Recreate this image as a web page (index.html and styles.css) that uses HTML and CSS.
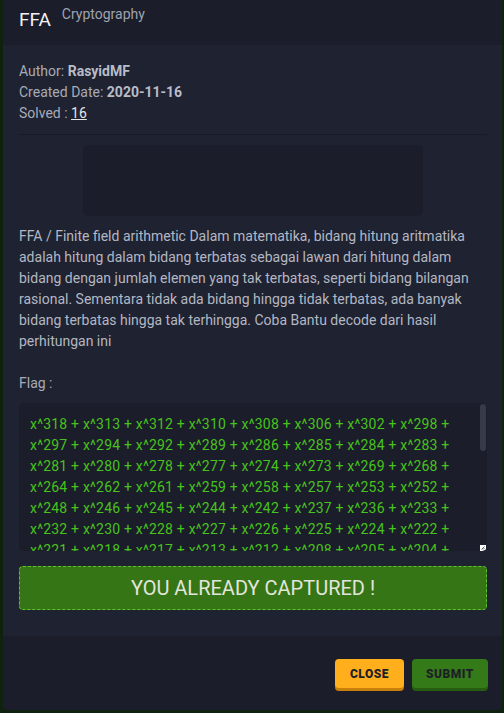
FILE: index.html
```html
<!DOCTYPE html>
<html lang="id">
<head>
<meta charset="utf-8">
<title>FFA</title>
<link rel="stylesheet" href="styles.css">
</head>
<body>
<div class="modal">
  <div class="modal-header">
    <h4 class="title">FFA</h4>
    <span class="category">Cryptography</span>
  </div>
  <div class="modal-body">
    <div class="meta">
      <div>Author: <b>RasyidMF</b></div>
      <div>Created Date: <b>2020-11-16</b></div>
      <div>Solved : <a class="solved" href="#">16</a></div>
    </div>
    <hr class="sep">
    <div class="files"></div>
    <p class="desc">FFA / Finite field arithmetic Dalam matematika, bidang hitung aritmatika adalah hitung dalam bidang terbatas sebagai lawan dari hitung dalam bidang dengan jumlah elemen yang tak terbatas, seperti bidang bilangan rasional. Sementara tidak ada bidang hingga tidak terbatas, ada banyak bidang terbatas hingga tak terhingga. Coba Bantu decode dari hasil perhitungan ini</p>
    <div class="flag-label">Flag :</div>
    <div class="flag-box">
      <div class="flag-text">x^318 + x^313 + x^312 + x^310 + x^308 + x^306 + x^302 + x^298 +
x^297 + x^294 + x^292 + x^289 + x^286 + x^285 + x^284 + x^283 +
x^281 + x^280 + x^278 + x^277 + x^274 + x^273 + x^269 + x^268 +
x^264 + x^262 + x^261 + x^259 + x^258 + x^257 + x^253 + x^252 +
x^248 + x^246 + x^245 + x^244 + x^242 + x^237 + x^236 + x^233 +
x^232 + x^230 + x^228 + x^227 + x^226 + x^225 + x^224 + x^222 +
x^221 + x^218 + x^217 + x^213 + x^212 + x^208 + x^205 + x^204 +
x^202 + x^201 + x^198 + x^197 + x^196 + x^194 + x^193 + x^190 +
x^189 + x^186 + x^185 + x^184 + x^180 + x^178 + x^177 + x^173 +
x^172 + x^170 + x^169 + x^166 + x^164 + x^162 + x^160 + x^158 +
x^157 + x^156 + x^153 + x^150 + x^149 + x^146 + x^145 + x^144</div>
      <span class="scroll-thumb"></span>
      <span class="resizer"><svg width="6" height="6" viewBox="0 0 6 6"><rect width="6" height="6" fill="#ffffff"/><path d="M1.5 4.5 L4.5 1.5 M3 4.5 L4.5 3" stroke="#444" stroke-width="0.8"/></svg></span>
    </div>
    <div class="captured">YOU ALREADY CAPTURED !</div>
  </div>
  <div class="modal-footer">
    <button class="btn btn-close" type="button">CLOSE</button>
    <button class="btn btn-submit" type="button">SUBMIT</button>
  </div>
</div>
</body>
</html>
```

FILE: styles.css
```css
* { box-sizing: border-box; }
html, body { margin: 0; padding: 0; }
body {
  background: #0e220d;
  font-family: Roboto, "Liberation Sans", sans-serif;
  width: 504px;
  height: 713px;
  overflow: hidden;
}
.modal {
  margin-left: 3px;
  width: 499px;
  height: 710px;
  background: #1f2230;
  border-radius: 0 0 5px 5px;
  display: flex;
  flex-direction: column;
  overflow: hidden;
}
.modal-header {
  height: 45px;
  background: #1b1d2a;
  padding: 0 16px;
  display: flex;
  align-items: flex-start;
}
.title {
  margin: 8px 0 0 0;
  font-size: 19px;
  font-weight: 400;
  color: #f2f2f2;
  line-height: 24px;
}
.category {
  margin: 6px 0 0 11px;
  font-size: 14px;
  color: #9fa3b0;
  line-height: 16px;
}
.modal-body {
  flex: 1;
  padding: 16px 16px 0 16px;
  display: flex;
  flex-direction: column;
}
.meta {
  font-size: 14px;
  line-height: 21px;
  color: #a7abb8;
}
.meta b { color: #b8bcc8; font-weight: 700; }
.solved { color: #e6e6e6; text-decoration: underline; }
.sep {
  border: 0;
  border-top: 1px solid #181a25;
  margin: 10px 0 10px 0;
  width: 468px;
}
.files {
  align-self: center;
  width: 340px;
  height: 71px;
  background: #1b1d2a;
  border-radius: 5px;
}
.desc {
  margin: 10px 0 0 0;
  font-size: 14px;
  line-height: 21px;
  color: #b3b7c3;
}
.flag-label {
  margin-top: 21px;
  font-size: 14px;
  line-height: 21px;
  color: #a7abb8;
}
.flag-box {
  position: relative;
  margin-top: 9px;
  width: 468px;
  height: 148px;
  background: #1b1d2a;
  border-radius: 5px;
  overflow: hidden;
}
.flag-text {
  height: 100%;
  padding: 11px 11px;
  color: #48c21c;
  font-size: 14px;
  letter-spacing: 0.2px;
  line-height: 21px;
  white-space: pre;
  overflow: hidden;
}
.scroll-thumb {
  position: absolute;
  top: 1px;
  right: 1px;
  width: 6px;
  height: 47px;
  border-radius: 3px;
  background: #363a4a;
}
.resizer {
  position: absolute;
  right: 1px;
  bottom: 0;
  width: 6px;
  height: 6px;
  display: block;
  line-height: 0;
}
.captured {
  margin-top: 15px;
  width: 468px;
  height: 44px;
  background: #357515;
  border: 1px dashed #5cc52c;
  border-radius: 4px;
  color: #e3e5dc;
  font-size: 20px;
  display: flex;
  align-items: center;
  justify-content: center;
}
.modal-footer {
  height: 74px;
  background: #1b1d2a;
  padding: 23px 14px 0 0;
  display: flex;
  justify-content: flex-end;
  align-items: flex-start;
  gap: 8px;
}
.btn {
  border: 0;
  border-radius: 4px;
  height: 29px;
  font-family: inherit;
  font-size: 12px;
  font-weight: 900;
  letter-spacing: 0.5px;
  color: #1d1f28;
  padding: 0;
}
.btn-close {
  width: 69px;
  background: #ffaf1b;
  box-shadow: 0 3px 0 #c97f0b;
}
.btn-submit {
  width: 76px;
  background: #357a18;
  box-shadow: 0 3px 0 #275d10;
}
```
